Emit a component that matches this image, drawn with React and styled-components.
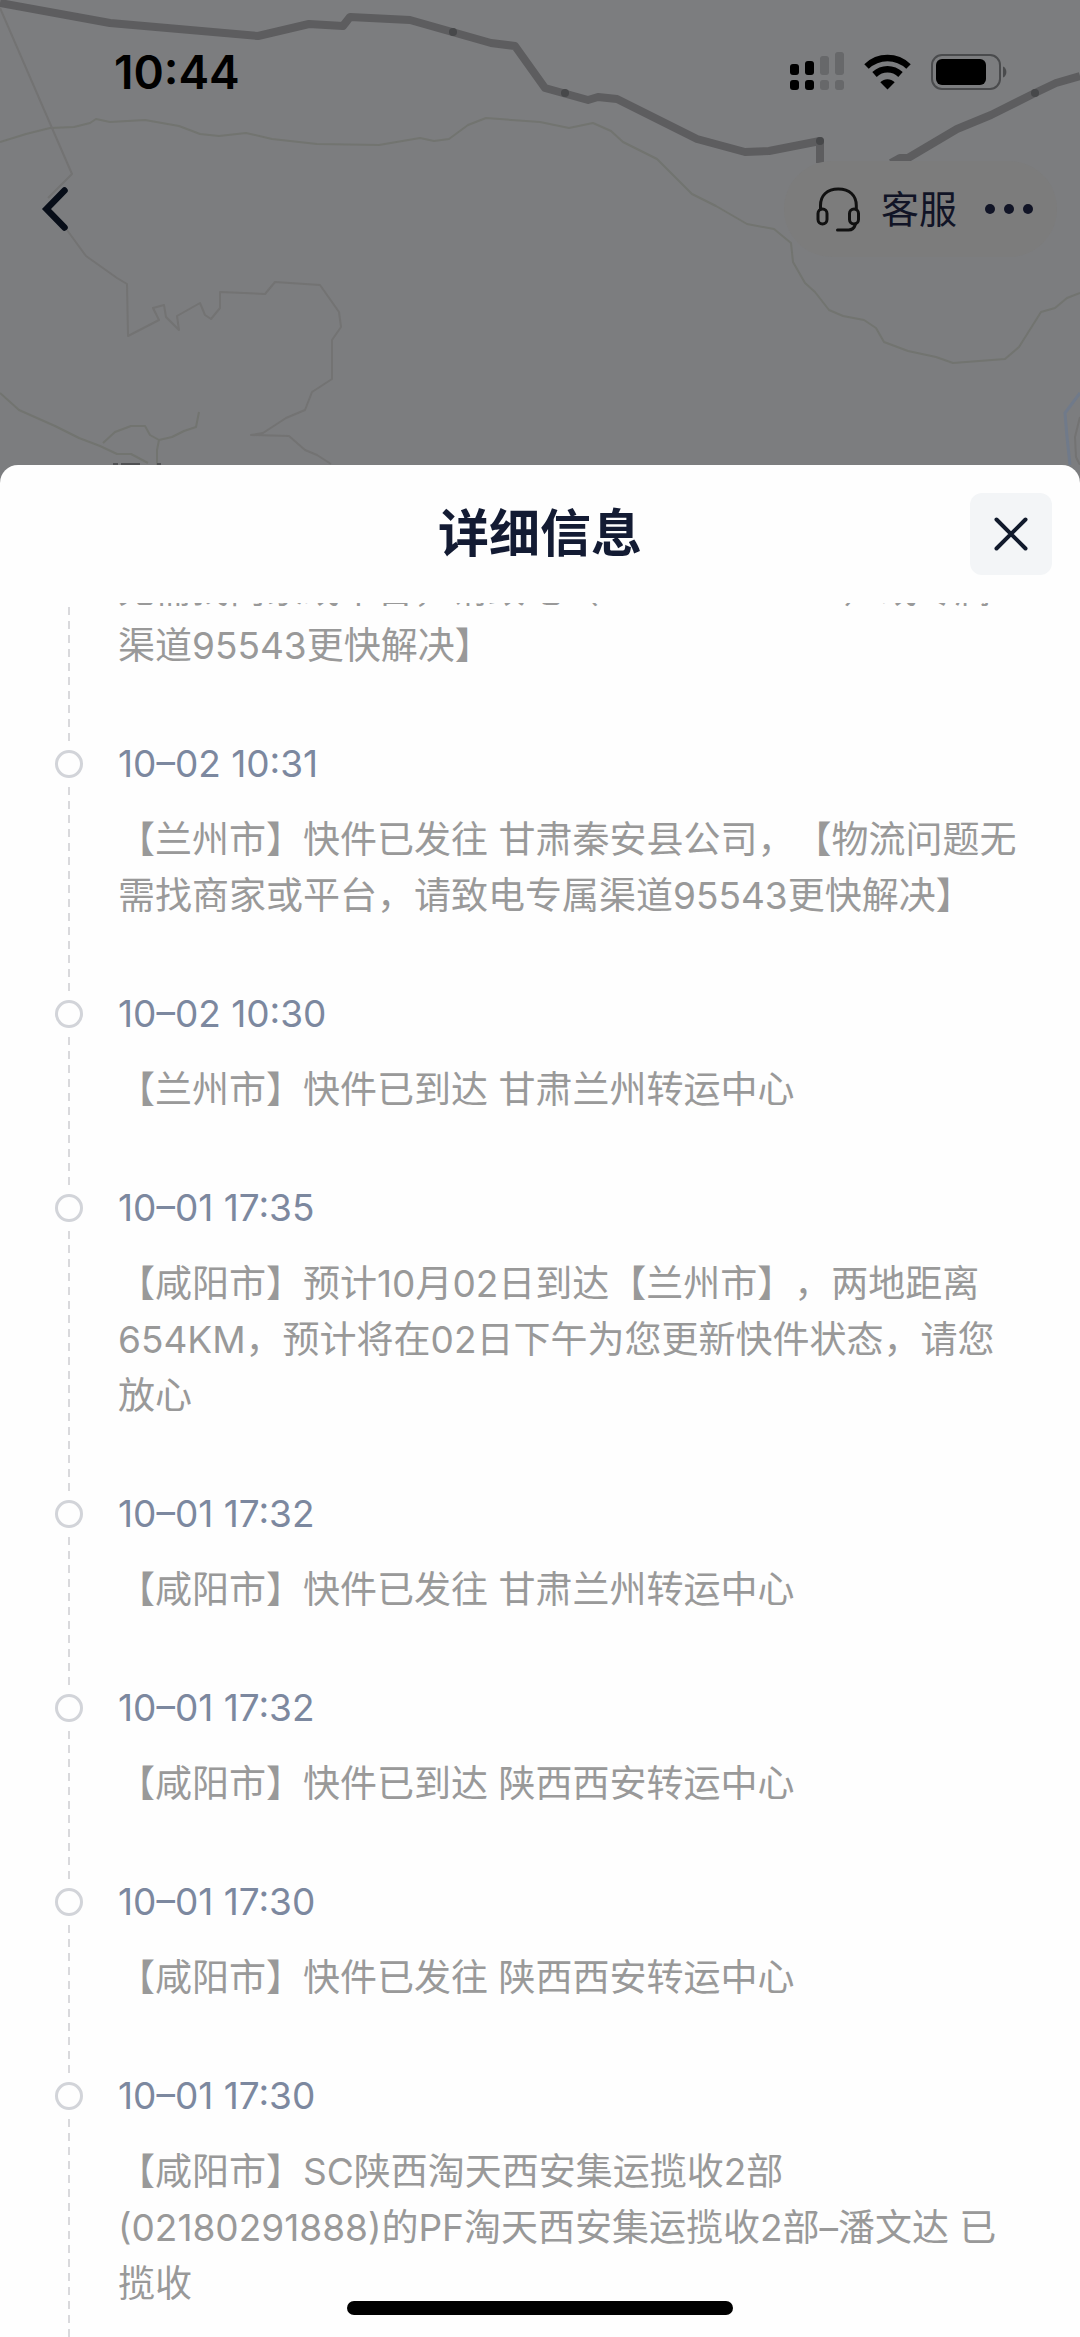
import React, { useLayoutEffect, useRef } from 'react'
import styled, { createGlobalStyle } from 'styled-components'

const GlobalStyle = createGlobalStyle`
  *,
  *::before {
    box-sizing: border-box;
  }

  body {
    margin: 0;
    font-family: Inter, 'Noto Sans CJK SC', sans-serif;
  }

  button {
    padding: 0;
    border: 0;
    background: none;
    font: inherit;
    color: inherit;
    cursor: pointer;
  }
`

const Screen = styled.div`
  position: relative;
  display: flex;
  flex-direction: column;
  height: 100vh;
  overflow: hidden;
  background: #7c7d7f;
`

const Backdrop = styled.div`
  position: relative;
  flex: 0 0 465px;
`

const MapCanvas = styled.svg`
  position: absolute;
  top: 0;
  left: 0;
  width: 100%;
  height: 100%;
`

const StatusBar = styled.div`
  position: relative;
  display: flex;
  align-items: center;
  justify-content: space-between;
  height: 144px;
  padding: 0 73px 0 114px;
  color: #000;
`

const Clock = styled.time`
  font-size: 46px;
  font-weight: 600;
  line-height: 56px;
`

const StatusIcons = styled.div`
  display: flex;
  align-items: center;
  gap: 20px;
`

const Nav = styled.nav`
  position: relative;
  display: flex;
  align-items: center;
  justify-content: space-between;
  padding: 17px 23px 0 35px;
`

const BackButton = styled.button`
  display: flex;
  color: #070d18;
`

const Capsule = styled.div`
  display: flex;
  align-items: center;
  height: 96px;
  padding: 0 24px 0 32px;
  gap: 28px;
  border-radius: 48px;
  background: #7c7c7c;
`

const ServiceButton = styled.button`
  display: flex;
  align-items: center;
  gap: 20px;
  font-size: 38px;
  line-height: 48px;
  color: #111426;
`

const MoreButton = styled.button`
  display: flex;
  color: #111426;
`

const Sheet = styled.section`
  flex: 1 1 auto;
  min-height: 0;
  display: flex;
  flex-direction: column;
  border-radius: 18px 18px 0 0;
  background: #fefefe;
`

const SheetHeader = styled.header`
  flex: 0 0 138px;
  display: grid;
  grid-template-columns: 82px 1fr 82px;
  align-items: center;
  padding: 0 28px;
`

const Title = styled.h1`
  grid-column: 2;
  margin: 0;
  font-size: 51px;
  font-weight: 600;
  line-height: 64px;
  text-align: center;
  color: #131b33;
`

const CloseButton = styled.button`
  display: flex;
  align-items: center;
  justify-content: center;
  height: 82px;
  border-radius: 12px;
  background: #f3f5f7;
  color: #111a2c;
`

const Scroller = styled.div`
  flex: 1 1 auto;
  min-height: 0;
  overflow-y: auto;
  scrollbar-width: none;
`

const Timeline = styled.ol`
  margin: 0;
  padding: 0 56px 64px 55px;
  list-style: none;
`

const Entry = styled.li`
  display: flex;
  gap: 35px;
`

const Rail = styled.div`
  flex: 0 0 28px;
  display: flex;
  flex-direction: column;
  align-items: center;
`

const Marker = styled.div`
  display: flex;
  align-items: center;
  height: 46px;

  &::before {
    content: '';
    width: 28px;
    height: 28px;
    border: 3px solid #d2d4d9;
    border-radius: 50%;
  }
`

const Dashes = styled.div`
  flex: 1 1 auto;
  width: 2px;
  background: repeating-linear-gradient(to top, #d9d9dc 0 8px, transparent 8px 14px);
`

const Content = styled.div`
  flex: 1 1 auto;
  min-width: 0;
  padding-bottom: 67px;
  font-size: 37px;
`

const Time = styled.time`
  display: block;
  margin-bottom: 25px;
  line-height: 46px;
  color: #7c889f;
`

const Detail = styled.p`
  margin: 0;
  line-height: 56px;
  text-spacing-trim: space-all;
  color: #999;
`

const HomeIndicator = styled.div`
  position: absolute;
  bottom: 22px;
  left: 50%;
  width: 386px;
  height: 14px;
  border-radius: 7px;
  background: #000;
  transform: translateX(-50%);
`

const MapBackground = () => (
  <MapCanvas viewBox="0 0 1080 465" preserveAspectRatio="xMidYMin slice" fill="none" aria-hidden="true">
    <g stroke="#727470" strokeWidth="2" strokeLinejoin="round">
      <path d="M0 142L26 134 50 128 74 127 90 123 96 119 110 122 145 120 179 126 200 134 219 136 246 133 272 139 317 144 379 145 420 138 434 141 449 139 468 125 486 118 540 122 569 128 593 123 611 131 623 142 657 159 692 194 716 206 747 224 774 229 791 243 793 262 805 283 815 292 829 310 843 316 864 320 876 328 884 342 908 351 936 357 953 363 1005 359 1019 347 1041 312 1055 308 1067 298 1080 293" />
      <path d="M0 393L19 410 55 426 79 438 100 446 117 454 131 454 148 463" />
      <path d="M103 443L115 432 131 426 145 426 150 435 159 440 157 450 157 465M159 440L172 437 184 431 196 427 199 412" />
    </g>
    <g stroke="#737373" strokeWidth="2" strokeLinejoin="round">
      <path d="M0 8L52 128 72 174 48 198" />
      <path d="M67 230L86 256 117 278 127 284 128 336 159 320 153 308 164 305 166 317 179 330 177 316 200 303 205 315 211 319 220 308 220 292 265 294 275 282 320 285 339 312 341 327 332 340 332 379 312 392 305 410 286 418 263 433 251 435 289 436 305 450 317 455 331 464" />
      <path d="M1080 417L1075 437 1076 457 1080 465" />
    </g>
    <path d="M1080 393L1065 413 1067 437 1070 465" stroke="#707a8a" strokeWidth="3" />
    <g stroke="#5d5d5f" strokeWidth="8" strokeLinejoin="round">
      <path d="M0 3L110 23 258 36 309 24 343 26 350 17 410 20 491 43 515 46 540 81 545 88 588 100 598 97 617 99 697 139 745 152 769 151 820 141V163" />
      <path d="M891 163L900 158 908 158 957 129 991 115 1035 93 1056 83 1080 76" />
    </g>
    <g fill="#47484a">
      <circle cx="453" cy="32" r="4" />
      <circle cx="565" cy="93" r="4" />
      <circle cx="820" cy="141" r="4" />
      <circle cx="1035" cy="93" r="4" />
    </g>
    <path d="M113 464H118M121 464H140M157 464H161" stroke="#505153" strokeWidth="2" />
  </MapCanvas>
)

const SignalIcon = () => (
  <svg width="54" height="40" viewBox="0 0 54 40" aria-hidden="true">
    <g fill="#000">
      <rect x="0" y="12" width="9" height="11" rx="3" />
      <rect x="15" y="9" width="9" height="14" rx="3" />
      <rect x="0" y="28" width="9" height="10" rx="3" />
      <rect x="15" y="28" width="9" height="10" rx="3" />
    </g>
    <g fill="#67686a">
      <rect x="30" y="4" width="9" height="19" rx="3" />
      <rect x="45" y="0" width="9" height="23" rx="3" />
      <rect x="30" y="28" width="9" height="10" rx="3" />
      <rect x="45" y="28" width="9" height="10" rx="3" />
    </g>
  </svg>
)

const WifiIcon = () => (
  <svg width="47" height="36" viewBox="0 0 47 36" fill="none" stroke="#000" strokeWidth="6.5" aria-hidden="true">
    <path d="M2.5 12.5C14.5 1.2 32.5 1.2 44.5 12.5" />
    <path d="M10.5 20.5C18 13.6 29 13.6 36.5 20.5" />
    <path d="M23.5 35.5L16.3 28.2C20.3 24.3 26.7 24.3 30.7 28.2Z" fill="#000" stroke="none" />
  </svg>
)

const BatteryIcon = () => (
  <svg width="76" height="36" viewBox="0 0 76 36" aria-hidden="true">
    <rect x="1" y="1" width="68" height="34" rx="10" fill="none" stroke="#4a4b4d" strokeWidth="2" />
    <rect x="5" y="5" width="50" height="26" rx="6" fill="#000" />
    <path d="M72 12.5C76.5 14 76.5 22 72 23.5Z" fill="#4a4b4d" />
  </svg>
)

const HeadsetIcon = () => (
  <svg width="45" height="45" viewBox="0 0 45 45" fill="none" stroke="#111" strokeWidth="3" strokeLinecap="round" aria-hidden="true">
    <path d="M4.5 22V18.5C4.5 8.5 11 2 22.3 2S40.3 8.5 40.3 18.5V22" />
    <rect x="2" y="22" width="9" height="15" rx="4.5" />
    <rect x="33.5" y="22" width="9" height="15" rx="4.5" />
    <path d="M39.5 37C38.5 40.5 36.5 43 32.5 43H21.5" />
  </svg>
)

const ChevronIcon = () => (
  <svg width="40" height="48" viewBox="0 0 40 48" fill="none" stroke="currentColor" strokeWidth="6.5" strokeLinecap="round" aria-hidden="true">
    <path d="M29.5 5.5L11.5 24 29.5 42.5" />
  </svg>
)

const DotsIcon = () => (
  <svg width="48" height="12" viewBox="0 0 48 12" fill="currentColor" aria-hidden="true">
    <circle cx="5" cy="6" r="5" />
    <circle cx="24" cy="6" r="5" />
    <circle cx="43" cy="6" r="5" />
  </svg>
)

const CloseIcon = () => (
  <svg width="34" height="34" viewBox="0 0 34 34" fill="none" stroke="currentColor" strokeWidth="4" strokeLinecap="round" aria-hidden="true">
    <path d="M2.5 2.5L31.5 31.5M31.5 2.5L2.5 31.5" />
  </svg>
)

const entries = [
  { detail: '无需找商家或平台，请致电（09386521234）或专属渠道95543更快解决】' },
  {
    time: '10–02 10:31',
    detail: '【兰州市】快件已发往 甘肃秦安县公司，【物流问题无需找商家或平台，请致电专属渠道95543更快解决】',
  },
  { time: '10–02 10:30', detail: '【兰州市】快件已到达 甘肃兰州转运中心' },
  {
    time: '10–01 17:35',
    detail: '【咸阳市】预计10月02日到达【兰州市】，两地距离654KM，预计将在02日下午为您更新快件状态，请您放心',
  },
  { time: '10–01 17:32', detail: '【咸阳市】快件已发往 甘肃兰州转运中心' },
  { time: '10–01 17:32', detail: '【咸阳市】快件已到达 陕西西安转运中心' },
  { time: '10–01 17:30', detail: '【咸阳市】快件已发往 陕西西安转运中心' },
  {
    time: '10–01 17:30',
    detail: '【咸阳市】SC陕西淘天西安集运揽收2部(02180291888)的PF淘天西安集运揽收2部–潘文达 已揽收',
  },
]

const App = () => {
  const scroller = useRef(null)

  useLayoutEffect(() => {
    scroller.current.scrollTop = 41
  }, [])

  return (
    <Screen>
      <GlobalStyle />
      <Backdrop>
        <MapBackground />
        <StatusBar>
          <Clock>10:44</Clock>
          <StatusIcons>
            <SignalIcon />
            <WifiIcon />
            <BatteryIcon />
          </StatusIcons>
        </StatusBar>
        <Nav>
          <BackButton aria-label="返回">
            <ChevronIcon />
          </BackButton>
          <Capsule>
            <ServiceButton>
              <HeadsetIcon />
              客服
            </ServiceButton>
            <MoreButton aria-label="更多">
              <DotsIcon />
            </MoreButton>
          </Capsule>
        </Nav>
      </Backdrop>
      <Sheet>
        <SheetHeader>
          <Title>详细信息</Title>
          <CloseButton aria-label="关闭">
            <CloseIcon />
          </CloseButton>
        </SheetHeader>
        <Scroller ref={scroller}>
          <Timeline>
            {entries.map(({ time, detail }, i) => (
              <Entry key={i}>
                <Rail>
                  {time && <Marker />}
                  <Dashes />
                </Rail>
                <Content>
                  {time && <Time>{time}</Time>}
                  <Detail>{detail}</Detail>
                </Content>
              </Entry>
            ))}
          </Timeline>
        </Scroller>
      </Sheet>
      <HomeIndicator />
    </Screen>
  )
}

export default App
